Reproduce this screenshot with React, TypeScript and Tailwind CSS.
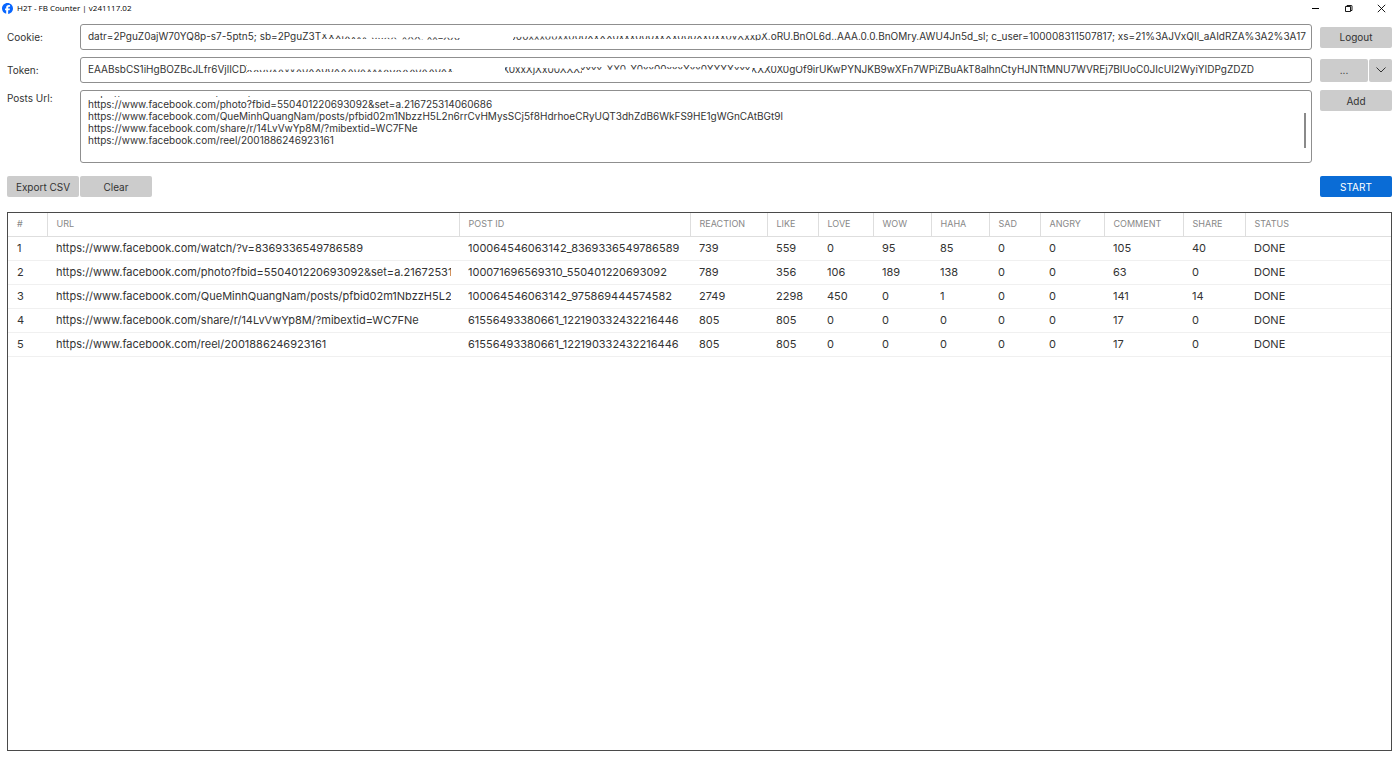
import React, { useEffect, useRef, useState } from 'react';
import { FaFacebook } from 'react-icons/fa6';

type PostRow = {
  url: string;
  postId: string;
  reaction: number;
  like: number;
  love: number;
  wow: number;
  haha: number;
  sad: number;
  angry: number;
  comment: number;
  share: number;
  status: string;
};

const rows: PostRow[] = [
  { url: 'https://www.facebook.com/watch/?v=8369336549786589', postId: '100064546063142_8369336549786589', reaction: 739, like: 559, love: 0, wow: 95, haha: 85, sad: 0, angry: 0, comment: 105, share: 40, status: 'DONE' },
  { url: 'https://www.facebook.com/photo?fbid=550401220693092&set=a.216725314060686', postId: '100071696569310_550401220693092', reaction: 789, like: 356, love: 106, wow: 189, haha: 138, sad: 0, angry: 0, comment: 63, share: 0, status: 'DONE' },
  { url: 'https://www.facebook.com/QueMinhQuangNam/posts/pfbid02m1NbzzH5L2n6rrCvHMysSCj5f8HdrhoeCRyUQT3dhZdB6WkFS9HE1gWGnCAtBGt9l', postId: '100064546063142_975869444574582', reaction: 2749, like: 2298, love: 450, wow: 0, haha: 1, sad: 0, angry: 0, comment: 141, share: 14, status: 'DONE' },
  { url: 'https://www.facebook.com/share/r/14LvVwYp8M/?mibextid=WC7FNe', postId: '61556493380661_122190332432216446', reaction: 805, like: 805, love: 0, wow: 0, haha: 0, sad: 0, angry: 0, comment: 17, share: 0, status: 'DONE' },
  { url: 'https://www.facebook.com/reel/2001886246923161', postId: '61556493380661_122190332432216446', reaction: 805, like: 805, love: 0, wow: 0, haha: 0, sad: 0, angry: 0, comment: 17, share: 0, status: 'DONE' },
];

const columns = [
  { label: '#', width: 'w-[39px]' },
  { label: 'URL', width: 'w-[412px]' },
  { label: 'POST ID', width: 'w-[231px]' },
  { label: 'REACTION', width: 'w-[77px]' },
  { label: 'LIKE', width: 'w-[51px]' },
  { label: 'LOVE', width: 'w-[55px]' },
  { label: 'WOW', width: 'w-[58px]' },
  { label: 'HAHA', width: 'w-[58px]' },
  { label: 'SAD', width: 'w-[51px]' },
  { label: 'ANGRY', width: 'w-[64px]' },
  { label: 'COMMENT', width: 'w-[79px]' },
  { label: 'SHARE', width: 'w-[62px]' },
  { label: 'STATUS', width: '' },
];

// The middle of each secret is placeholder text, hidden under the white strokes
const cookieValue =
  'datr=2PguZ0ajW70YQ8p-s7-5ptn5; sb=2PguZ3T' +
  'XXXjXxxx_00XX_xXX; xx=XXXX00XXXX000xxx00xx000XxXX0xxx000xxXx000Xx0xx0yXxxpX.' +
  'oRU.BnOL6d..AAA.0.0.BnOMry.AWU4Jn5d_sl; c_user=100008311507817; xs=21%3AJVxQIl_aAIdRZA%3A2%3A17';

const tokenValue =
  'EAABsbCS1iHgBOZBcJLfr6VjlICD' +
  'XX00xXyyX0XX00XXX0XxxxX0XXX0XX0XxX00xx0gXX0xxXjXx00XXXxxxx_XX0_X0xx00xxxXxx0XXXXxxxXXX0X0g' +
  'Of9irUKwPYNJKB9wXFn7WPiZBuAkT8alhnCtyHJNTtMNU7WVREj7BIUoC0JIcUI2WyiYIDPgZDZD';

const initialUrls = rows.map((row) => row.url).join('\n') + '\n';

const buttonClass = 'rounded-[2px] bg-[#cccccc] text-[10px] leading-4 text-[#333333] hover:bg-[#bdbdbd]';
const fieldClass = 'block h-[26px] w-full rounded-[3px] border border-[#8f8f8f] bg-white pb-[2px] pl-[7px] pr-[3px] text-[10px] leading-4 text-[#333333] outline-none';

export default function App() {
  const [cookie, setCookie] = useState(cookieValue);
  const [token, setToken] = useState(tokenValue);
  const [urls, setUrls] = useState(initialUrls);
  const [results, setResults] = useState<PostRow[]>(rows);
  const urlsRef = useRef<HTMLTextAreaElement>(null);

  // Keep the last url in view
  useEffect(() => {
    if (urlsRef.current) {
      urlsRef.current.scrollTop = urlsRef.current.scrollHeight;
    }
  }, []);

  return (
    <div className="flex min-h-screen flex-col bg-white pb-[7px] font-['Inter',sans-serif] text-[#333333]">
      <header className="flex h-4 items-center justify-between pl-0.5 pr-3.5">
        <div className="flex items-center gap-1">
          <FaFacebook className="size-[11px] text-[#0866ff]" />
          <h1 className="font-['Open_Sans',sans-serif] text-[8px] leading-4 text-black">H2T - FB Counter | v241117.02</h1>
        </div>
        <div className="flex items-center gap-6 text-black">
          <button aria-label="Minimize">
            <svg width="9" height="9" viewBox="0 0 9 9" stroke="currentColor" fill="none">
              <path d="M1 4.500h7" />
            </svg>
          </button>
          <button aria-label="Restore">
            <svg width="9" height="9" viewBox="0 0 9 9" stroke="currentColor" fill="none">
              <path d="M1.5 2.5h5v5h-5zM3 2.500v-1h4.500q.5 0 .5.5v4.500h-1" strokeWidth="0.9" />
            </svg>
          </button>
          <button aria-label="Close">
            <svg width="9" height="9" viewBox="0 0 9 9" stroke="currentColor" fill="none">
              <path d="M.8 .8l7.400 7.400M8.200 .8l-7.400 7.400" strokeWidth="0.9" />
            </svg>
          </button>
        </div>
      </header>

      <main className="flex flex-1 flex-col pl-[7px] pr-2 pt-2">
        <div className="grid grid-cols-[73px_1fr_80px] gap-y-[7px]">
          <label htmlFor="cookie" className="self-center text-[10px] leading-4">Cookie:</label>
          <div className="relative">
            <input id="cookie" value={cookie} onChange={(e) => setCookie(e.target.value)} className={fieldClass} />
            <svg className="pointer-events-none absolute left-[241px] top-[2px]" width="449" height="20" fill="white">
              <path d="M0 0H449V6L436 9L420 10L330 10L260 10L192 11V20H139V12L100 11L60 12L30 11L0 8Z" />
              <path d="M0 20V13H60L139 14L192 14L260 13L330 13L400 13L449 15V20Z" />
            </svg>
          </div>
          <div className="flex items-center pl-2">
            <button className={`${buttonClass} h-[21px] w-full`}>Logout</button>
          </div>

          <label htmlFor="token" className="self-center text-[10px] leading-4">Token:</label>
          <div className="relative">
            <input id="token" value={token} onChange={(e) => setToken(e.target.value)} className={fieldClass} />
            <svg className="pointer-events-none absolute left-[167px] top-[2px]" width="555" height="20" fill="white">
              <path d="M0 0H555V7H520V9H505L500 6L420 5L340 7L330 10L258 8V20H207V10L150 11L80 10L0 11Z" />
              <path d="M0 20V13H207V20ZM335 20V11L420 10L505 11V20Z" />
            </svg>
          </div>
          <div className="flex items-center gap-px pl-2">
            <button className={`${buttonClass} h-[23px] flex-1`} aria-label="Token options">...</button>
            <button className={`${buttonClass} flex h-[23px] w-[23px] items-center justify-center`} aria-label="Open token menu">
              <svg width="10" height="6" viewBox="0 0 10 6" fill="none" stroke="currentColor">
                <path d="M.5 .5L5 5L9.500 .5" />
              </svg>
            </button>
          </div>

          <label htmlFor="urls" className="self-start text-[10px] leading-4">Posts Url:</label>
          <div className="relative h-[73px] rounded-[3px] border border-[#8f8f8f] pt-[5px]">
            <textarea
              id="urls"
              ref={urlsRef}
              wrap="off"
              value={urls}
              onChange={(e) => setUrls(e.target.value)}
              className="block h-[62px] w-full resize-none px-[7px] text-[10px] leading-3 outline-none [scrollbar-width:none]"
            />
            <span className="pointer-events-none absolute right-[5px] top-[22px] h-[35px] w-[2px] bg-[#8a8a8a]" />
          </div>
          <div className="pl-2">
            <button className={`${buttonClass} block h-[21px] w-full`}>Add</button>
          </div>
        </div>

        <div className="mt-[13px] flex items-center justify-between">
          <div className="flex gap-px">
            <button className={`${buttonClass} h-[21px] w-[72px]`}>Export CSV</button>
            <button className={`${buttonClass} h-[21px] w-[72px]`} onClick={() => setResults([])}>Clear</button>
          </div>
          <button className="h-[21px] w-[72px] rounded-[2px] bg-[#0a6cd6] text-[10px] leading-4 text-white hover:bg-[#005bbd]">START</button>
        </div>

        <div className="mt-[15px] flex-1 border border-[#4a4a4a]">
          <table className="w-full table-fixed border-collapse text-left">
            <thead>
              <tr className="h-[23px] border-b border-[#dedede]">
                {columns.map((col, i) => (
                  <th
                    key={col.label}
                    className={`${col.width} ${i < columns.length - 1 ? 'border-r border-[#dedede]' : ''} p-0 pl-[9px] text-[9px] font-normal leading-3 text-[#888888]`}
                  >
                    {col.label}
                  </th>
                ))}
              </tr>
            </thead>
            <tbody>
              {results.map((row, index) => (
                <tr key={index} className="h-6 border-b border-[#f0f0f0]">
                  {[index + 1, ...Object.values(row)].map((value, i) => (
                    <td key={i} className="p-0 pl-[9px] pr-2 text-[11px] leading-4">
                      <div className="overflow-hidden whitespace-nowrap">{value}</div>
                    </td>
                  ))}
                </tr>
              ))}
            </tbody>
          </table>
        </div>
      </main>
    </div>
  );
}
